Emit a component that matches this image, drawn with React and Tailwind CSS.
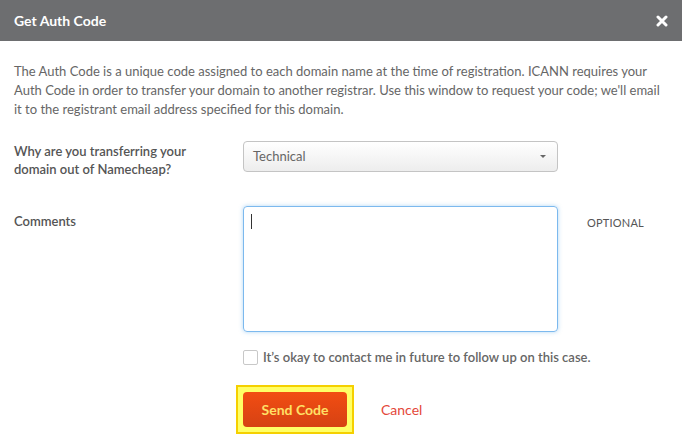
const FONT = { fontFamily: 'Lato, "Open Sans", sans-serif' }

export default function App() {
  return (
    <div className="w-[682px] h-[445px] bg-white overflow-hidden" style={FONT}>
      {/* Thanh tiêu đề */}
      <div className="h-[41px] bg-[#6d6e70] flex items-center justify-between pl-[14px] pr-[14px]">
        <h2 className="text-[14px] font-bold text-white">Get Auth Code</h2>
        <svg width="12" height="12" viewBox="0 0 12 12" aria-label="Close">
          <path d="M2 2 L10 10 M10 2 L2 10" stroke="#fff" strokeWidth="3" strokeLinecap="round" />
        </svg>
      </div>

      <div className="px-[14px] pt-[21px]">
        <p className="text-[13px] leading-[19px] text-[#666]">
          The Auth Code is a unique code assigned to each domain name at the time of registration. ICANN requires your
          Auth Code in order to transfer your domain to another registrar. Use this window to request your code; we'll email
          it to the registrant email address specified for this domain.
        </p>

        <div className="mt-[22px] flex">
          <label className="w-[229px] text-[13px] leading-[18px] font-semibold text-[#555] pt-[1px]">
            Why are you transferring your<br />domain out of Namecheap?
          </label>
          <div className="w-[315px] h-[31px] rounded-[4px] border border-[#c4c4c4] bg-gradient-to-b from-white to-[#ededed] flex items-center justify-between pl-[9px] pr-[11px]">
            <span className="text-[13px] text-[#666]">Technical</span>
            <span className="w-0 h-0 border-l-[3px] border-r-[3px] border-t-[3px] border-l-transparent border-r-transparent border-t-[#666]" />
          </div>
        </div>

        <div className="mt-[28px] flex">
          <label className="w-[229px] text-[13px] font-semibold text-[#555] pt-[6px]">Comments</label>
          <div className="w-[315px] h-[126px] rounded-[4px] border border-[#7cb9ee] shadow-[0_0_4px_rgba(102,175,233,0.5)] pl-[7px] pt-[7px]">
            <span className="block w-px h-[15px] bg-[#333]" />
          </div>
          <span className="ml-[29px] pt-[9px] text-[11px] text-[#555] tracking-[0.2px]">OPTIONAL</span>
        </div>

        <div className="mt-[16px] ml-[229px] flex items-center gap-[5px]">
          <span className="w-[15px] h-[15px] rounded-[2px] border border-[#c8c8c8] bg-white" />
          <span className="text-[13px] font-semibold text-[#666]">It’s okay to contact me in future to follow up on this case.</span>
        </div>

        <div className="mt-[17px] ml-[222px] flex items-center">
          <div className="border-[2px] border-[#f5d000] bg-[#ffff66] p-[5px]">
            <button className="w-[104px] h-[35px] rounded-[4px] bg-gradient-to-b from-[#f24d12] to-[#d64213] text-[14px] font-bold text-[#ffe066]">
              Send Code
            </button>
          </div>
          <span className="ml-[27px] text-[14px] text-[#e4473a]">Cancel</span>
        </div>
      </div>
    </div>
  )
}
